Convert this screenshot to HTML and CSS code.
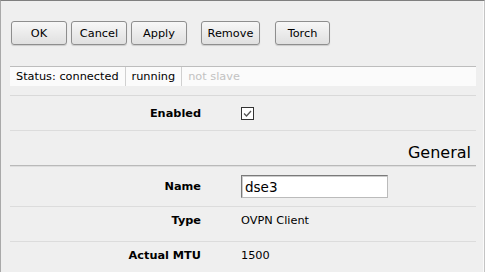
FILE: index.html
```html
<!DOCTYPE html>
<html>
<head>
<meta charset="utf-8">
<link rel="stylesheet" href="styles.css">
</head>
<body>
<div class="frame">
  <div class="content">
    <div class="toolbar">
      <div class="group">
        <button class="btn w56">OK</button>
        <button class="btn w56">Cancel</button>
        <button class="btn w56">Apply</button>
      </div>
      <button class="btn w59 remove">Remove</button>
      <button class="btn w55 torch">Torch</button>
    </div>
    <div class="status">
      <div class="cell">Status: connected</div>
      <div class="cell">running</div>
      <div class="cell off">not slave</div>
    </div>
    <div class="sep"></div>
    <div class="row enabled">
      <div class="label">Enabled</div>
      <div class="value"><span class="check"><svg width="13" height="13" viewBox="0 0 13 13"><rect x="0.5" y="0.5" width="12" height="12" fill="#fff" stroke="#333"/><path d="M3 6.5 L5.5 9 L10 4" fill="none" stroke="#555" stroke-width="1.3"/></svg></span></div>
    </div>
    <div class="header">General</div>
    <div class="row name">
      <div class="label">Name</div>
      <div class="value"><input class="field" type="text" value="dse3"></div>
    </div>
    <div class="row text">
      <div class="label">Type</div>
      <div class="value">OVPN Client</div>
    </div>
    <div class="row text">
      <div class="label">Actual MTU</div>
      <div class="value">1500</div>
    </div>
  </div>
</div>
</body>
</html>
```
FILE: styles.css
```css
html, body {
  margin: 0;
  padding: 0;
  background: #efefef;
  height: 272px;
  overflow: hidden;
}
body {
  font-family: "DejaVu Sans", Verdana, sans-serif;
  font-size: 11.3px;
  color: #000;
}
.frame {
  box-sizing: border-box;
  width: 485px;
  height: 272px;
  border-top: 1px solid #7f7f7f;
  border-left: 1px solid #a9a9a9;
  border-right: 1px solid #c4c4c4;
  box-shadow: inset -1px 0 0 #fafafa;
}
.content {
  padding: 0 8px 0 9px;
}
.toolbar {
  display: flex;
  padding-top: 20px;
  padding-left: 1px;
  height: 24px;
}
.group {
  display: flex;
  gap: 4px;
}
.btn {
  box-sizing: border-box;
  height: 24px;
  border: 1px solid #8e8e8e;
  border-radius: 3px;
  background: linear-gradient(#f7f7f7, #e0e0e0);
  box-shadow: 0 1px 1px rgba(0,0,0,0.15);
  font-family: inherit;
  font-size: 11.3px;
  color: #000;
  padding: 0;
}
.w56 { width: 56px; }
.w59 { width: 59px; }
.w55 { width: 55px; }
.remove { margin-left: 14px; }
.torch { margin-left: 15px; }
.status {
  margin-top: 21px;
  height: 20px;
  display: flex;
  background: #fbfbfb;
  border-top: 1px solid #bdbdbd;
  box-sizing: border-box;
}
.cell {
  padding: 0 6px;
  line-height: 19px;
  border-right: 1px solid #d0d0d0;
}
.cell.off {
  border-right: none;
  color: #c2c2c2;
}
.sep {
  margin-top: 9px;
  border-top: 1px solid #d9d9d9;
}
.row {
  box-sizing: border-box;
  display: flex;
  align-items: center;
  height: 35px;
  border-bottom: 1px solid #dcdcdc;
}
.row.name { height: 41px; }
.row.text {
  align-items: flex-start;
  padding-top: 7px;
  line-height: 13px;
}
.label {
  width: 191px;
  text-align: right;
  font-weight: bold;
}
.value {
  margin-left: 40px;
}
.check {
  display: block;
  width: 13px;
  height: 13px;
}
.check svg { display: block; }
.header {
  height: 35px;
  box-sizing: border-box;
  text-align: right;
  font-size: 16px;
  padding-right: 5px;
  padding-top: 13px;
  border-bottom: 1px solid #b9b9b9;
  box-shadow: 0 1px 0 #dedede;
  margin-bottom: 1px;
  line-height: 18px;
}
.row.name { height: 40px; }
.field {
  box-sizing: border-box;
  width: 147px;
  height: 23px;
  border: 1px solid #7a7a7a;
  border-right-color: #bbb;
  border-bottom-color: #bbb;
  box-shadow: inset 1px 1px 0 #ccc;
  background: #fff;
  font-family: inherit;
  font-size: 13.5px;
  padding: 0 3px;
  margin: 0;
}
```
